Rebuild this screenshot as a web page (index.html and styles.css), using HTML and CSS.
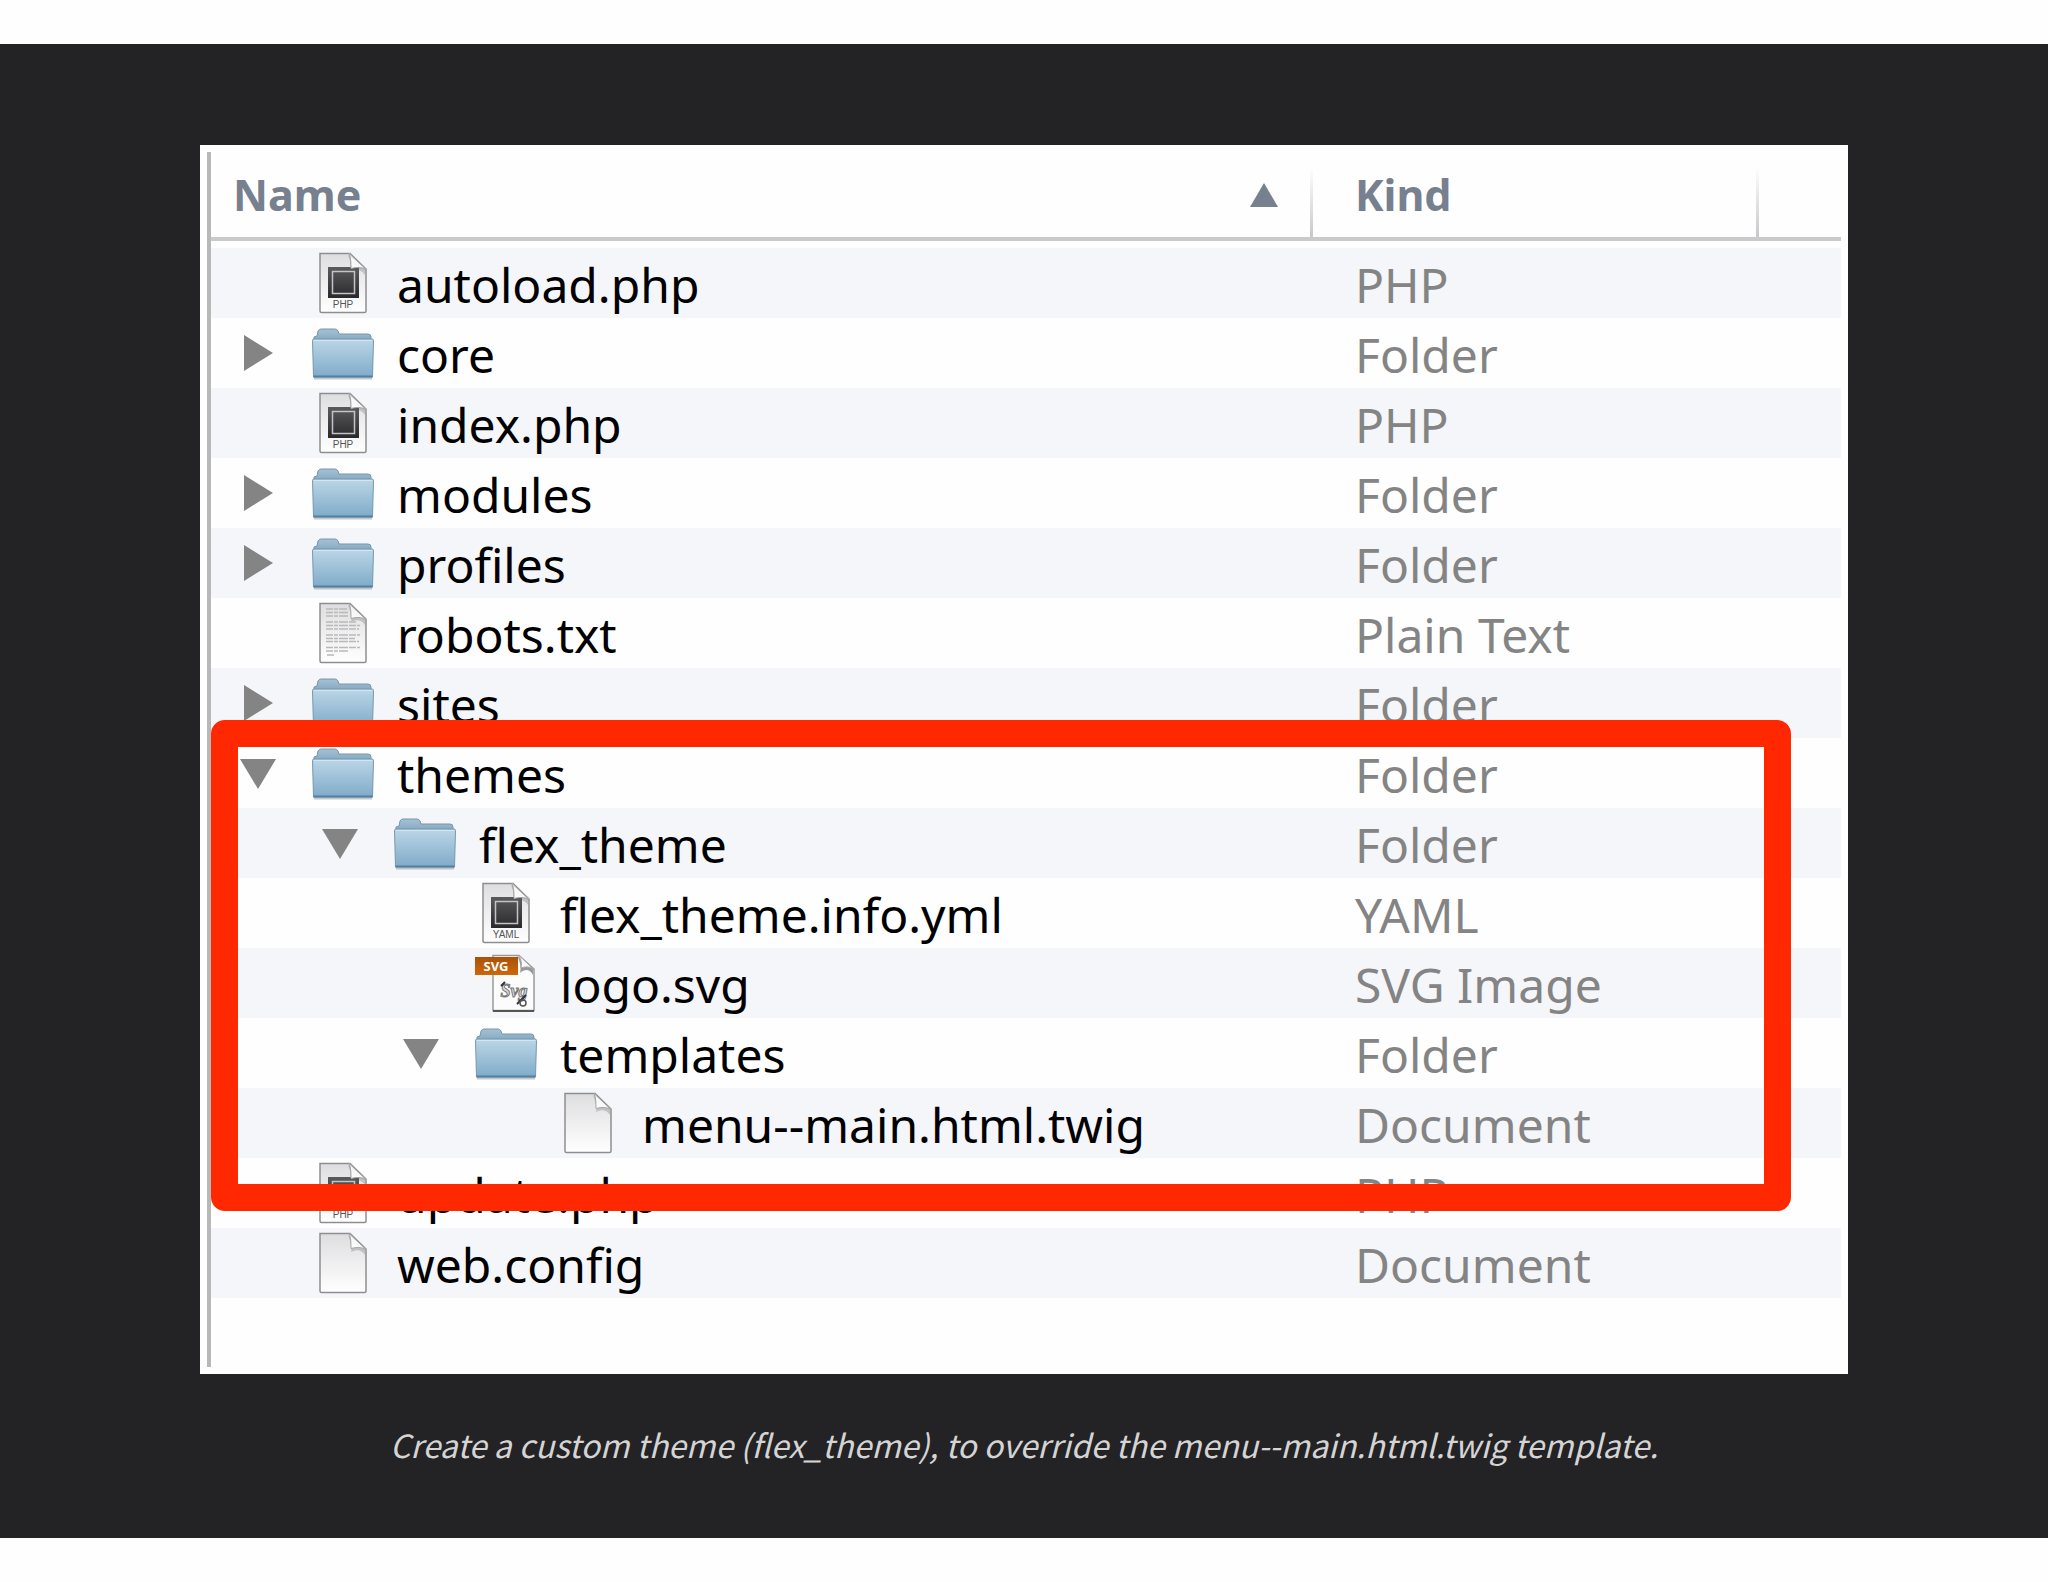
FILE: index.html
```html
<!DOCTYPE html>
<html lang="en">
<head>
<meta charset="utf-8">
<meta name="viewport" content="width=device-width, initial-scale=1">
<title>Custom theme files</title>
<link rel="stylesheet" href="styles.css">
</head>
<body>
<svg class="sprite" aria-hidden="true">
  <defs>
    <linearGradient id="folder-front" x1="0" y1="0" x2="0" y2="1">
      <stop offset="0" stop-color="#bcd6e6"/><stop offset="1" stop-color="#7fabc9"/>
    </linearGradient>
    <linearGradient id="folder-back" x1="0" y1="0" x2="0" y2="1">
      <stop offset="0" stop-color="#a4c2d6"/><stop offset="1" stop-color="#86a9c0"/>
    </linearGradient>
    <linearGradient id="paper" x1="0" y1="0" x2="0" y2="1">
      <stop offset="0" stop-color="#dedee0"/><stop offset="1" stop-color="#ffffff"/>
    </linearGradient>
    <linearGradient id="screen" x1="0" y1="0" x2="0" y2="1">
      <stop offset="0" stop-color="#5a5a5c"/><stop offset="1" stop-color="#29292b"/>
    </linearGradient>
    <linearGradient id="curl" x1="0" y1="1" x2="1" y2="0">
      <stop offset="0" stop-color="#ffffff"/><stop offset="0.6" stop-color="#f4f4f4"/><stop offset="1" stop-color="#b5b5b5"/>
    </linearGradient>
    <linearGradient id="banner" x1="0" y1="0" x2="0" y2="1">
      <stop offset="0" stop-color="#a85206"/><stop offset="1" stop-color="#cf660a"/>
    </linearGradient>
  </defs>
  <symbol id="icon-folder" viewBox="0 0 64 64">
    <path d="M3 57.500H61" stroke="#9aa5ad" stroke-width="2" opacity=".6"/>
    <path d="M3 19V16L6 15L7 10Q8 8 10 8H24Q26 8 27 10L28 13H57Q60 13 60 16V19Z" fill="url(#folder-back)" stroke="#7896aa"/>
    <path d="M1.500 19.500Q1.500 18 3 18H61Q62.500 18 62.500 19.500L61.500 56H2.500Z" fill="url(#folder-front)" stroke="#7598b0"/>
    <path d="M3 19.500H61" stroke="#d2e5f0"/>
    <path d="M2.500 55.500H61.500" stroke="#547f9f" stroke-width="2"/>
  </symbol>
  <symbol id="icon-page" viewBox="0 0 64 64">
    <path d="M9 2.500H39L55 18V60Q55 61.500 53.500 61.500H10.500Q9 61.500 9 60Z" fill="url(#paper)" stroke="#8e8e90" stroke-width="1.500"/>
    <path d="M37 4C40 12 41 19 40 21C46 18 51 19 54 24V17Z" fill="#777" opacity=".35"/>
    <path d="M38 2.500C40 7 40 12 40 17.500C46 16 50 16 55 18.500Z" fill="url(#curl)" stroke="#a5a5a7"/>
  </symbol>
  <symbol id="icon-exec" viewBox="0 0 64 64">
    <use href="#icon-page"/>
    <rect x="17" y="16" width="31" height="31" fill="url(#screen)"/>
    <rect x="21.500" y="20.500" width="22" height="22" fill="none" stroke="#c4c4c6" stroke-width="1.500"/>
    <path d="M38 2.500C40 7 40 12 40 17.500C46 16 50 16 55 18.500Z" fill="url(#curl)" stroke="#a5a5a7"/>
  </symbol>
  <symbol id="icon-text" viewBox="0 0 64 64">
    <use href="#icon-page"/>
    <g stroke="#b9b9bb" stroke-width="1.500" stroke-dasharray="7 1 4 1 9 1">
      <path d="M15 8H36M15 11.500H37M15 15H37M15 21H45M15 24.500H49M15 28H48M15 34H49M15 37.500H44M15 40.500H48M15 46.500H49M15 50H38M16 54H24"/>
    </g>
  </symbol>
  <symbol id="arrow-right" viewBox="0 0 36 36"><path d="M4 0L33 18L4 36Z" fill="#848484"/></symbol>
  <symbol id="arrow-down" viewBox="0 0 36 36"><path d="M0 4H36L18 34Z" fill="#848484"/></symbol>
</svg>

<figure class="figure">
  <div class="panel">
    <div class="list">
      <table class="files">
        <colgroup><col><col class="col-kind"><col class="col-end"></colgroup>
        <thead>
          <tr>
            <th scope="col" aria-sort="ascending"><div class="head">Name<svg class="sort" viewBox="0 0 28 24" aria-hidden="true"><path d="M14 0L28 24H0Z" fill="#76808f"/></svg></div></th>
            <th scope="col"><div class="head">Kind</div></th>
            <td></td>
          </tr>
        </thead>
        <tbody>
          <tr><td><div class="name"><span class="toggle"></span><svg class="icon" viewBox="0 0 64 64"><use href="#icon-exec"/><text x="32" y="57" class="icon-label">PHP</text></svg><span class="label">autoload.php</span></div></td><td><span class="label">PHP</span></td><td></td></tr>
          <tr><td><div class="name"><button class="toggle" aria-label="Expand core"><svg viewBox="0 0 36 36"><use href="#arrow-right"/></svg></button><svg class="icon"><use href="#icon-folder"/></svg><span class="label">core</span></div></td><td><span class="label">Folder</span></td><td></td></tr>
          <tr><td><div class="name"><span class="toggle"></span><svg class="icon" viewBox="0 0 64 64"><use href="#icon-exec"/><text x="32" y="57" class="icon-label">PHP</text></svg><span class="label">index.php</span></div></td><td><span class="label">PHP</span></td><td></td></tr>
          <tr><td><div class="name"><button class="toggle" aria-label="Expand modules"><svg viewBox="0 0 36 36"><use href="#arrow-right"/></svg></button><svg class="icon"><use href="#icon-folder"/></svg><span class="label">modules</span></div></td><td><span class="label">Folder</span></td><td></td></tr>
          <tr><td><div class="name"><button class="toggle" aria-label="Expand profiles"><svg viewBox="0 0 36 36"><use href="#arrow-right"/></svg></button><svg class="icon"><use href="#icon-folder"/></svg><span class="label">profiles</span></div></td><td><span class="label">Folder</span></td><td></td></tr>
          <tr><td><div class="name"><span class="toggle"></span><svg class="icon"><use href="#icon-text"/></svg><span class="label">robots.txt</span></div></td><td><span class="label">Plain Text</span></td><td></td></tr>
          <tr><td><div class="name"><button class="toggle" aria-label="Expand sites"><svg viewBox="0 0 36 36"><use href="#arrow-right"/></svg></button><svg class="icon"><use href="#icon-folder"/></svg><span class="label">sites</span></div></td><td><span class="label">Folder</span></td><td></td></tr>
          <tr><td><div class="name"><button class="toggle" aria-label="Collapse themes"><svg viewBox="0 0 36 36"><use href="#arrow-down"/></svg></button><svg class="icon"><use href="#icon-folder"/></svg><span class="label">themes</span></div></td><td><span class="label">Folder</span></td><td></td></tr>
          <tr><td><div class="name level-1"><button class="toggle" aria-label="Collapse flex_theme"><svg viewBox="0 0 36 36"><use href="#arrow-down"/></svg></button><svg class="icon"><use href="#icon-folder"/></svg><span class="label">flex_theme</span></div></td><td><span class="label">Folder</span></td><td></td></tr>
          <tr><td><div class="name level-2"><span class="toggle"></span><svg class="icon" viewBox="0 0 64 64"><use href="#icon-exec"/><text x="32" y="57" class="icon-label">YAML</text></svg><span class="label">flex_theme.info.yml</span></div></td><td><span class="label">YAML</span></td><td></td></tr>
          <tr><td><div class="name level-2"><span class="toggle"></span><svg class="icon" viewBox="0 0 64 64">
            <path d="M19 4.500H45L60 18V59.500H19Z" fill="#fcfcfc" stroke="#99999b" stroke-width="1.500"/>
            <path d="M19 60H60" stroke="#555" stroke-width="2"/>
            <path d="M43 5C47 11 47 19 46 22C52 17 56 19 59 24V17Z" fill="#555" opacity=".6"/>
            <path d="M45 4.500C47 9 48 12 47 17C53 15 57 16 60 18.500Z" fill="url(#curl)" stroke="#a5a5a7"/>
            <rect x="1" y="6" width="43" height="18" fill="url(#banner)"/>
            <text x="22" y="20" class="banner-text">SVG</text>
            <text x="40" y="46" class="script-text">Svg</text>
            <path d="M27 35l4-4M43 53l9-9" stroke="#333" stroke-width="2"/>
            <circle cx="49" cy="52" r="3" fill="none" stroke="#555" stroke-width="1.500"/>
          </svg><span class="label">logo.svg</span></div></td><td><span class="label">SVG Image</span></td><td></td></tr>
          <tr><td><div class="name level-2"><button class="toggle" aria-label="Collapse templates"><svg viewBox="0 0 36 36"><use href="#arrow-down"/></svg></button><svg class="icon"><use href="#icon-folder"/></svg><span class="label">templates</span></div></td><td><span class="label">Folder</span></td><td></td></tr>
          <tr><td><div class="name level-3"><span class="toggle"></span><svg class="icon"><use href="#icon-page"/></svg><span class="label">menu--main.html.twig</span></div></td><td><span class="label">Document</span></td><td></td></tr>
          <tr><td><div class="name"><span class="toggle"></span><svg class="icon" viewBox="0 0 64 64"><use href="#icon-exec"/><text x="32" y="57" class="icon-label">PHP</text></svg><span class="label">update.php</span></div></td><td><span class="label">PHP</span></td><td></td></tr>
          <tr><td><div class="name"><span class="toggle"></span><svg class="icon"><use href="#icon-page"/></svg><span class="label">web.config</span></div></td><td><span class="label">Document</span></td><td></td></tr>
        </tbody>
      </table>
    </div>
    <div class="highlight"></div>
  </div>
  <figcaption class="caption">Create a custom theme (flex_theme), to override the menu--main.html.twig template.</figcaption>
</figure>
</body>
</html>
```
FILE: styles.css
```css
* {
  box-sizing: border-box;
}

body {
  margin: 0;
  padding: 44px 0;
  background: #fefefe;
  font-family: "Noto Sans", "Open Sans", sans-serif;
}

.sprite {
  position: absolute;
  width: 0;
  height: 0;
}

.figure {
  margin: 0;
  padding: 101px 200px 70px;
  background: #232224;
}

.panel {
  position: relative;
  padding: 7px;
  background: #fefefe;
}

.list {
  padding-bottom: 69px;
  border-left: 4px solid #b8b8b8;
}

.files {
  width: 100%;
  table-layout: fixed;
  border-collapse: separate;
  border-spacing: 0;
  font-size: 48px;
  line-height: 66px;
  color: #848484;
}

.col-kind {
  width: 446px;
}

.col-end {
  width: 82px;
}

.files td,
.files th {
  padding: 0;
  text-align: left;
  white-space: nowrap;
}

.files th,
.files thead td {
  height: 89px;
  border-bottom: 4px solid #cacacc;
}

.files th {
  background: linear-gradient(#fefefe 15px, #c8c8ca) right / 3px 100% no-repeat;
}

.head {
  display: flex;
  align-items: center;
  justify-content: space-between;
  padding: 0 35px 0 22px;
  font-size: 43px;
  font-weight: 700;
  color: #76808f;
}

th + th .head {
  padding-left: 42px;
}

.sort {
  width: 28px;
  height: 24px;
}

/* gap between the header rule and the first row */
.files tbody::before {
  content: "";
  display: table-row;
  height: 7px;
}

.files tbody td {
  height: 70px;
}

.files tbody td + td {
  padding-left: 42px;
}

.files tbody tr:nth-child(odd) td {
  background: #f5f6f9;
}

.name {
  display: flex;
  align-items: center;
  padding-left: 29px;
  color: #000;
}

.label {
  display: block;
  padding-top: 4px;
}

.level-1 {
  padding-left: 111px;
}

.level-2 {
  padding-left: 192px;
}

.level-3 {
  padding-left: 274px;
}

.toggle {
  display: block;
  flex: none;
  width: 36px;
  height: 36px;
  margin-right: 35px;
  padding: 0;
  border: 0;
  background: none;
}

.toggle svg {
  display: block;
  width: 36px;
  height: 36px;
}

.icon {
  flex: none;
  width: 64px;
  height: 64px;
  margin-right: 22px;
}

.icon-label {
  font: 10px "Liberation Sans", sans-serif;
  text-anchor: middle;
  fill: #555;
}

.banner-text {
  font: 700 13px "Noto Sans", sans-serif;
  text-anchor: middle;
  fill: #fff;
}

.script-text {
  font: italic 700 18px "Liberation Serif", serif;
  text-anchor: middle;
  fill: #ddd;
  stroke: #777;
  stroke-width: 1px;
}

.highlight {
  position: absolute;
  top: 575px;
  right: 57px;
  bottom: 163px;
  left: 11px;
  border: 27px solid #ff2800;
  border-radius: 14px;
  pointer-events: none;
}

.caption {
  padding-top: 46px;
  font-family: "Noto Sans CJK JP", sans-serif;
  font-size: 32px;
  font-style: italic;
  font-weight: 400;
  line-height: 48px;
  text-align: center;
  color: #d4d4d4;
}
```
